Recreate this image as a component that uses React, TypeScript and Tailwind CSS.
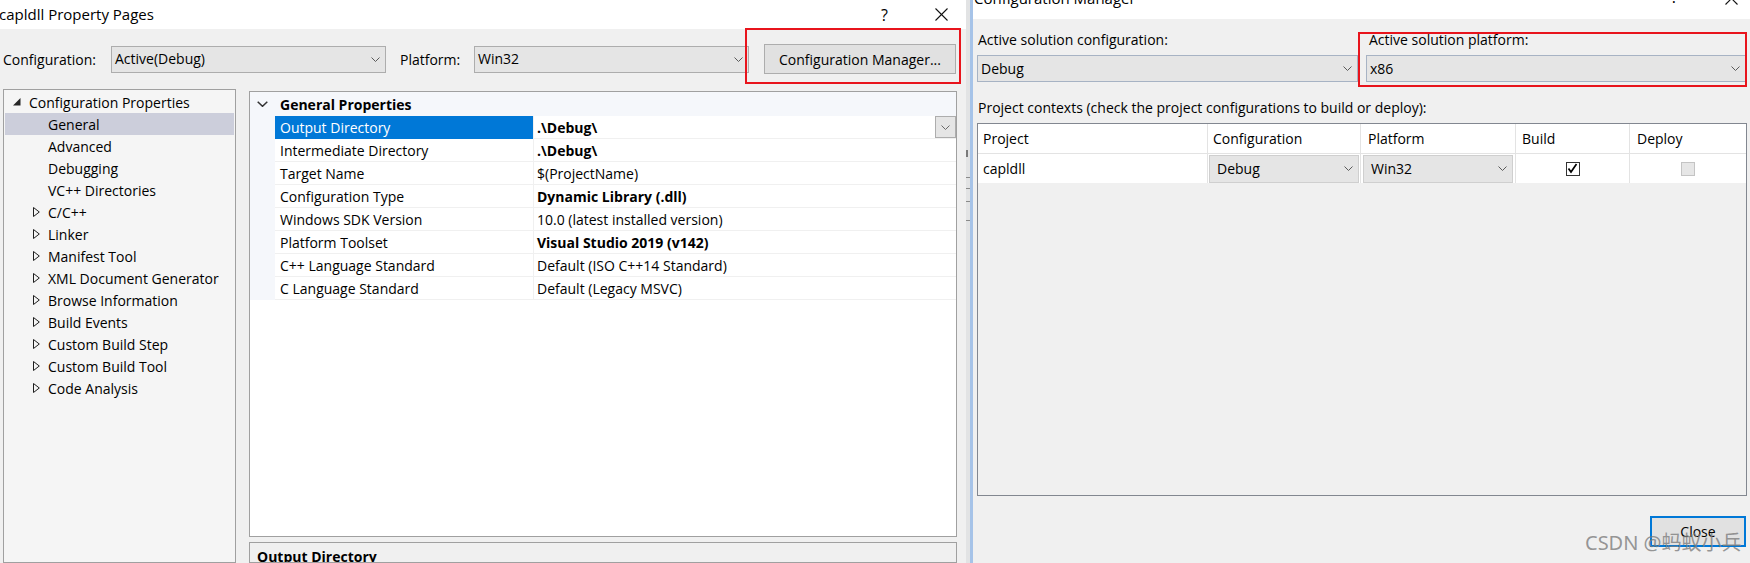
import React from 'react'

const font = "font-['Open_Sans','Noto_Sans',sans-serif]"

function Chevron({ color = '#5a5a5a' }: { color?: string }) {
  return (
    <svg width="9" height="5" viewBox="0 0 9 5" className="shrink-0">
      <polyline points="0.5,0.5 4.5,4.5 8.5,0.5" fill="none" stroke={color} strokeWidth="1" />
    </svg>
  )
}

function CloseX({ size = 13 }: { size?: number }) {
  return (
    <svg width={size} height={size} viewBox="0 0 13 13">
      <line x1="0.5" y1="0.5" x2="12.5" y2="12.5" stroke="#111" strokeWidth="1.1" />
      <line x1="12.5" y1="0.5" x2="0.5" y2="12.5" stroke="#111" strokeWidth="1.1" />
    </svg>
  )
}

function Combo({ text, className }: { text: string; className: string }) {
  return (
    <div className={`flex shrink-0 items-center justify-between bg-[#e5e5e5] border ${className}`}>
      <span className="pl-[3px] leading-none">{text}</span>
      <span className="mr-[5px]">
        <Chevron />
      </span>
    </div>
  )
}

const treeChildren = ['General', 'Advanced', 'Debugging', 'VC++ Directories']
const treeGroups = [
  'C/C++',
  'Linker',
  'Manifest Tool',
  'XML Document Generator',
  'Browse Information',
  'Build Events',
  'Custom Build Step',
  'Custom Build Tool',
  'Code Analysis',
]

const props: [string, string, boolean][] = [
  ['Output Directory', '.\\Debug\\', true],
  ['Intermediate Directory', '.\\Debug\\', true],
  ['Target Name', '$(ProjectName)', false],
  ['Configuration Type', 'Dynamic Library (.dll)', true],
  ['Windows SDK Version', '10.0 (latest installed version)', false],
  ['Platform Toolset', 'Visual Studio 2019 (v142)', true],
  ['C++ Language Standard', 'Default (ISO C++14 Standard)', false],
  ['C Language Standard', 'Default (Legacy MSVC)', false],
]

function PropertyPages() {
  return (
    <div className="relative flex h-full w-[966px] shrink-0 flex-col bg-[#f0f0f0]">
      {/* title bar */}
      <div className="flex h-[29px] shrink-0 items-center bg-white">
        <span className="-ml-[1px] text-[15px]">capldll Property Pages</span>
        <span className="ml-auto text-[16px]">?</span>
        <span className="ml-[47px] mr-[18px] flex">
          <CloseX />
        </span>
      </div>

      {/* configuration / platform row */}
      <div className="mt-[15px] flex h-[30px] shrink-0 items-center pl-[3px]">
        <span className="w-[108px]">Configuration:</span>
        <Combo text="Active(Debug)" className="h-[27px] w-[275px] border-[#adadad]" />
        <span className="ml-[14px] w-[74px]">Platform:</span>
        <Combo text="Win32" className="h-[27px] w-[275px] border-[#adadad]" />
        <button className="ml-[15px] h-[30px] w-[192px] border border-[#adadad] bg-[#e1e1e1]">
          Configuration Manager...
        </button>
      </div>

      {/* annotation */}
      <div className="absolute left-[745px] top-[28px] h-[56px] w-[216px] border-2 border-[#e8141c]" />

      <div className="mt-[15px] flex min-h-0 flex-1">
        {/* tree */}
        <div className="ml-[3px] w-[233px] border border-[#a0a0a0] bg-[#f5f5f5] pt-[1px]">
          <div className="flex h-[22px] items-center">
            <svg width="8" height="8" viewBox="0 0 8 8" className="ml-[9px]">
              <polygon points="7.5,0 7.5,7.5 0,7.5" fill="#262626" />
            </svg>
            <span className="ml-[8px]">Configuration Properties</span>
          </div>
          {treeChildren.map((c, i) => (
            <div
              key={c}
              className={`mx-[1px] flex h-[22px] items-center pl-[43px] ${i === 0 ? 'bg-[#cccedb]' : ''}`}
            >
              {c}
            </div>
          ))}
          {treeGroups.map((g) => (
            <div key={g} className="flex h-[22px] items-center">
              <svg width="7" height="10" viewBox="0 0 7 10" className="ml-[29px]">
                <polygon points="0.5,0.5 6.3,5 0.5,9.5" fill="none" stroke="#1e1e1e" strokeWidth="1" />
              </svg>
              <span className="ml-[8px]">{g}</span>
            </div>
          ))}
        </div>

        {/* property grid */}
        <div className="ml-[13px] flex min-h-0 w-[708px] flex-col">
          <div className="mt-[2px] h-[446px] shrink-0 border border-[#a0a0a0] bg-white">
            <div className="flex h-[24px] items-center bg-[#f5f7fb]">
              <svg width="11" height="6" viewBox="0 0 11 6" className="ml-[7px]">
                <polyline points="0.7,0.7 5.5,5.3 10.3,0.7" fill="none" stroke="#333" strokeWidth="1.5" />
              </svg>
              <span className="ml-[12px] font-bold">General Properties</span>
            </div>
            {props.map(([name, value, bold], i) => (
              <div key={name} className="flex h-[23px]">
                <div className="w-[25px] bg-[#f5f7fb]" />
                <div
                  className={`flex w-[258px] items-center border-b pl-[5px] ${
                    i === 0 ? 'border-[#0078d7] bg-[#0078d7] text-white' : 'border-[#f0f0f0]'
                  }`}
                >
                  {name}
                </div>
                <div className="flex flex-1 items-center border-b border-l border-[#f0f0f0] pl-[3px]">
                  <span className={bold ? 'font-bold' : ''}>{value}</span>
                  {i === 0 && (
                    <div className="ml-auto flex h-[22px] w-[21px] items-center justify-center border border-[#adadad] bg-[#e5e5e5]">
                      <Chevron color="#6a6a6a" />
                    </div>
                  )}
                </div>
              </div>
            ))}
          </div>
          <div className="mt-[5px] min-h-0 flex-1 overflow-hidden border border-[#a0a0a0] bg-[#f0f0f0] px-[7px] pt-[3px]">
            <span className="font-bold">Output Directory</span>
          </div>
        </div>
      </div>
    </div>
  )
}

function Checkbox({ checked, disabled }: { checked?: boolean; disabled?: boolean }) {
  return (
    <div
      className={`flex h-[14px] w-[14px] items-center justify-center border ${
        disabled ? 'border-[#c4c4c4] bg-[#e6e6e6]' : 'border-[#333] bg-white'
      }`}
    >
      {checked && (
        <svg width="11" height="11" viewBox="0 0 11 11">
          <polyline points="1.5,5.5 4,9 9.5,1" fill="none" stroke="#000" strokeWidth="1.7" />
        </svg>
      )}
    </div>
  )
}

function ConfigManager() {
  return (
    <div className="relative flex flex-1 flex-col bg-[#f0f0f0]">
      <div className="flex h-[19px] shrink-0 items-start overflow-hidden bg-white">
        <span className="-mt-[12px] ml-[1px] text-[15px] leading-[20px]">Configuration Manager</span>
        <span className="-mt-[13px] ml-auto text-[16px] leading-[20px]">?</span>
        <span className="-mt-[8px] ml-[47px] mr-[12px] flex">
          <CloseX />
        </span>
      </div>

      <div className="flex flex-col pl-[4px]">
        <div className="mt-[11px] flex gap-[8px]">
          <div className="flex w-[381px] flex-col">
            <span className="pl-[1px] leading-[20px]">Active solution configuration:</span>
            <Combo text="Debug" className="mt-[5px] h-[27px] border-[#a7b3c4]" />
          </div>
          <div className="flex w-[380px] flex-col">
            <span className="pl-[3px] leading-[20px]">Active solution platform:</span>
            <Combo text="x86" className="mt-[5px] h-[27px] border-[#a7b3c4]" />
          </div>
        </div>

        <span className="mt-[16px] pl-[1px] leading-[20px]">
          Project contexts (check the project configurations to build or deploy):
        </span>

        {/* table */}
        <div className="mt-[5px] flex h-[373px] w-[770px] flex-col border border-[#828790] bg-[#f0f0f0]">
          <div className="flex h-[29px] bg-white">
            <div className="flex w-[230px] items-center border-r border-[#e3e3e3] pl-[5px]">Project</div>
            <div className="flex w-[153px] items-center border-r border-[#e3e3e3] pl-[5px]">Configuration</div>
            <div className="flex w-[155px] items-center border-r border-[#e3e3e3] pl-[7px]">Platform</div>
            <div className="flex w-[114px] items-center border-r border-[#e3e3e3] pl-[6px]">Build</div>
            <div className="flex flex-1 items-center pl-[7px]">Deploy</div>
          </div>
          <div className="flex h-[30px] border-t border-[#e3e3e3] bg-white">
            <div className="flex w-[230px] items-center border-r border-[#e3e3e3] pl-[5px]">capldll</div>
            <div className="flex w-[153px] items-center border-r border-[#e3e3e3] pl-[1px]">
              <Combo text="Debug" className="h-[28px] w-[150px] border-[#cfcfcf] [&>span:first-child]:pl-[7px]" />
            </div>
            <div className="flex w-[155px] items-center border-r border-[#e3e3e3] pl-[2px]">
              <Combo text="Win32" className="h-[28px] w-[150px] border-[#cfcfcf] [&>span:first-child]:pl-[7px]" />
            </div>
            <div className="flex w-[114px] items-center justify-center border-r border-[#e3e3e3]">
              <Checkbox checked />
            </div>
            <div className="flex flex-1 items-center justify-center">
              <Checkbox disabled />
            </div>
          </div>
        </div>

        <div className="mt-[20px] flex justify-end pr-[4px]">
          <button className="h-[31px] w-[96px] border-2 border-[#0078d7] bg-[#e1e1e1]">Close</button>
        </div>
      </div>

      {/* annotation */}
      <div className="absolute left-[385px] top-[32px] h-[55px] w-[389px] border-2 border-[#e8141c]" />
    </div>
  )
}

export default function App() {
  return (
    <div className={`relative flex h-[563px] w-[1750px] overflow-hidden bg-[#f0f0f0] text-[14px] text-black ${font}`}>
      <PropertyPages />
      <div className="flex w-[4px] shrink-0 flex-col bg-[#e2e3e4]">
        <div className="mt-[150px] h-[7px] w-[2px] bg-[#7a7a7a]" />
        <div className="mt-[20px] h-px bg-[#8a8a8a]" />
        <div className="mt-[10px] h-px bg-[#8a8a8a]" />
        <div className="mt-[12px] h-[20px] border-y border-[#8a8a8a]" />
      </div>
      <div className="w-[3px] shrink-0 bg-[#a6c3e8]" />
      <ConfigManager />
      <div className="pointer-events-none absolute left-[1585px] top-[531px] text-[20px] leading-[24px] text-[#7c7c7c]/80 font-['Noto_Sans','Noto_Sans_CJK_SC',sans-serif]">
        CSDN @蚂蚁小兵
      </div>
    </div>
  )
}
